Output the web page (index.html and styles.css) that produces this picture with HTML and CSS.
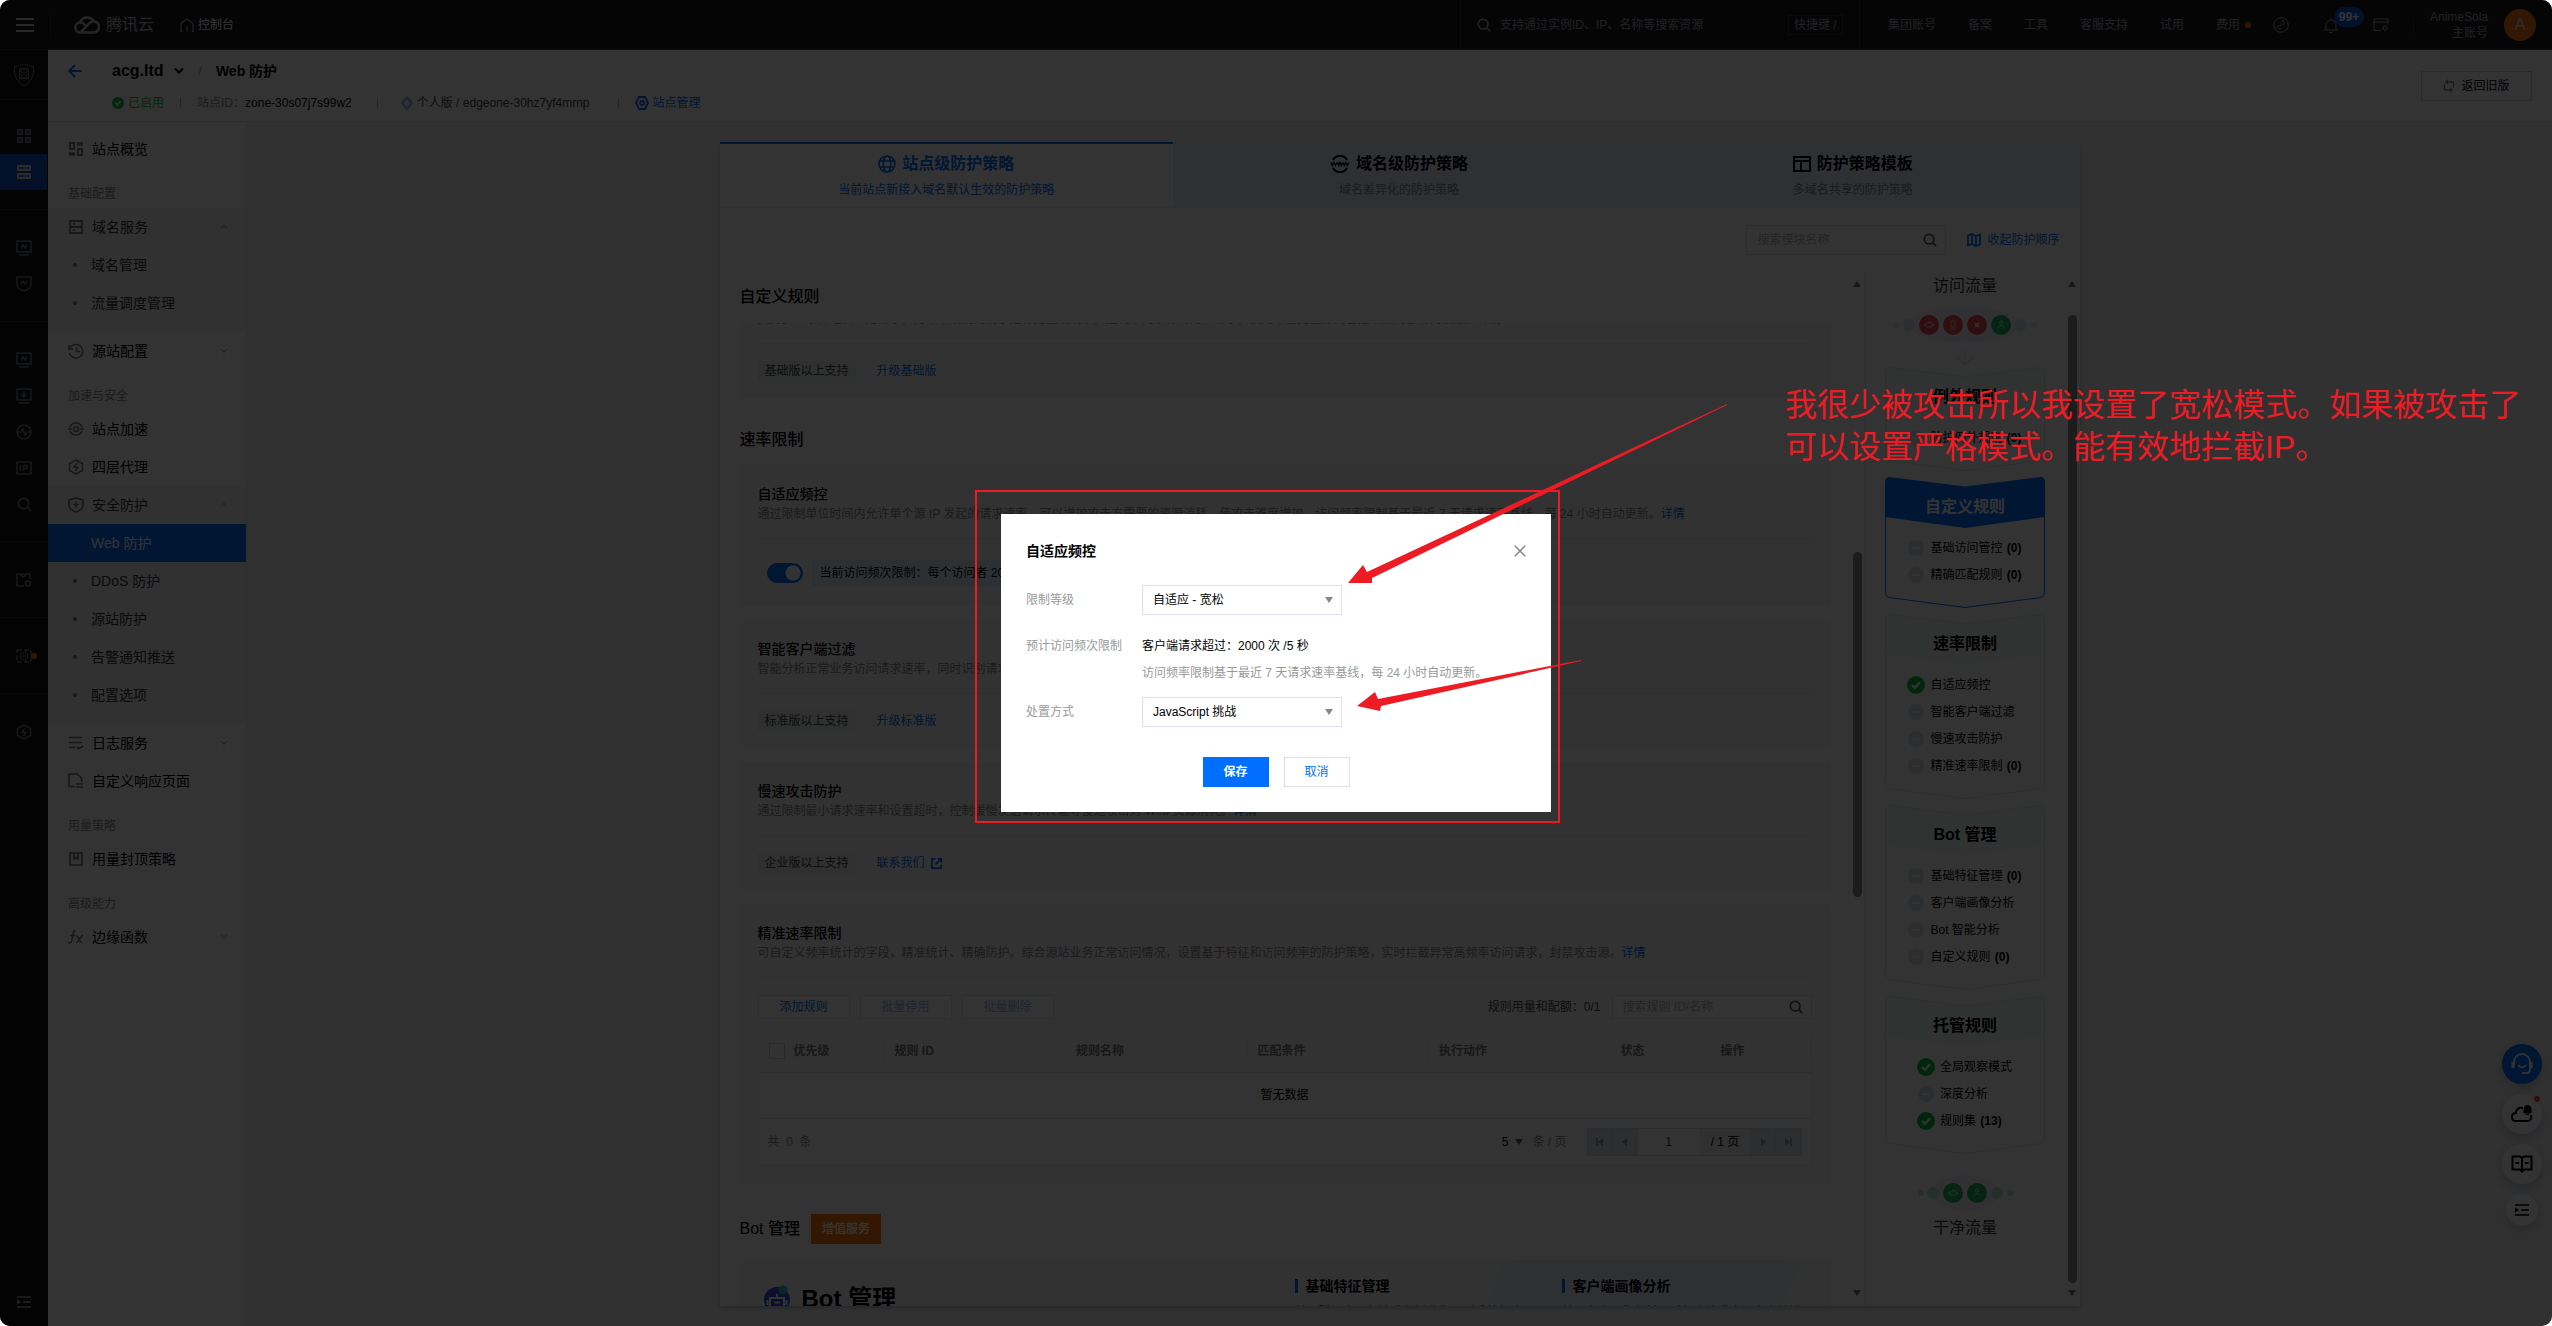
FILE: index.html
```html
<!DOCTYPE html>
<html lang="zh-CN">
<head>
<meta charset="utf-8">
<title>Web 防护 - 腾讯云控制台</title>
<link rel="stylesheet" href="styles.css">
</head>
<body>
<svg class="sprite" aria-hidden="true">
  <symbol id="i-menu" viewBox="0 0 18 14"><path d="M0 1h18M0 7h18M0 13h18" stroke-width="2"/></symbol>
  <symbol id="i-cloud" viewBox="0 0 26 20"><path d="M6.500 17.500a5 5 0 0 1-.5-10 7.500 7.500 0 0 1 13.500-1.500M6.500 17.500h13a5.500 5.500 0 1 0-4-9.300L6.500 17.500M6 7.500c2.500 0 4 1.200 5.500 2.800" stroke-width="2.500"/></symbol>
  <symbol id="i-home" viewBox="0 0 14 14"><path d="M2.500 13.500H1V5.500L7 .8l6 4.700v8h-1.500M7 13.500V8" stroke-width="1.300"/></symbol>
  <symbol id="i-search" viewBox="0 0 16 16"><circle cx="7" cy="7" r="5.500" stroke-width="2"/><path d="M11 11l4 4" stroke-width="2"/></symbol>
  <symbol id="i-link" viewBox="0 0 16 16"><circle cx="8" cy="8" r="7.300"/><path d="M6.500 9.500l3-3M7.500 5.500l1-1c2-1.500 4 .5 2.800 2.500l-1.300 1.300M8.500 10.500l-1 1c-2 1.500-4-.5-2.800-2.500L6 7.700"/></symbol>
  <symbol id="i-bell" viewBox="0 0 16 16"><path d="M1 13h14M3 13V8a5 5 0 0 1 10 0v5M8 1v2M6 15.400h4"/></symbol>
  <symbol id="i-card" viewBox="0 0 16 14"><path d="M8 12.500H1V1h14v5.500M1 4h14"/><circle cx="12" cy="10" r="2"/><path d="M12 7v1M12 12v1.500M9 10h1M14 10h1.500"/></symbol>
  <symbol id="i-shield" viewBox="0 0 22 24"><path d="M11 1c3 1.500 6 2.200 9.500 2.500 1 9-2.500 15-9.500 19.500C4 18.500.5 12.500 1.500 3.500 5 3.200 8 2.500 11 1z"/><path d="M6.500 5.500h9v10h-9zM6.500 5.500l9 10M15.500 5.500l-9 10"/><ellipse cx="11" cy="10.500" rx="3" ry="4.500"/></symbol>
  <symbol id="i-grid" viewBox="0 0 14 14"><path d="M1 1h4v4H1zM9 1h4v4H9zM1 9h4v4H1zM9 9h4v4H9z" stroke-width="2"/></symbol>
  <symbol id="i-dash" viewBox="0 0 14 14"><path d="M1 1h4v6H1zM9 7h4v6H9z" stroke-width="2"/><path d="M8 2h6M0 12h6" stroke-width="3.500"/></symbol>
  <symbol id="i-server" viewBox="0 0 14 14"><path d="M1 1h12v4H1zM1 9h12v4H1z" stroke-width="2"/><path d="M3 3h1M6 3h5M3 11h1M6 11h5" stroke-width="1"/></symbol>
  <symbol id="i-rack" viewBox="0 0 14 14"><path d="M1 1h12v12H1zM1 7h12" stroke-width="1.800"/><path d="M4 4h2M4 10h2" stroke-width="1.500"/></symbol>
  <symbol id="i-monitor" viewBox="0 0 16 16"><path d="M1 1h14v11H1zM3 15h10M5 8l2-3 2 3 2-3" stroke-width="1.500"/></symbol>
  <symbol id="i-guard" viewBox="0 0 16 16"><path d="M1 1h14v8c0 3-4 5-7 6-3-1-7-3-7-6zM5 8l2-3 2 3 2-3" stroke-width="1.500"/></symbol>
  <symbol id="i-screen" viewBox="0 0 16 16"><path d="M1 1h14v11H1zM3 15h10M8 3v6M5.500 6.500L8 9l2.500-2.500" stroke-width="1.500"/></symbol>
  <symbol id="i-pulse" viewBox="0 0 16 16"><circle cx="8" cy="8" r="7" stroke-width="1.500"/><path d="M1 8h4l2-3 2 6 2-3h4" stroke-width="1.500"/></symbol>
  <symbol id="i-ip" viewBox="0 0 16 14"><path d="M1 1h14v12H1zM4.500 4v6M7.500 10V4.500h3.500V7.500H7.500" stroke-width="1.500"/></symbol>
  <symbol id="i-box" viewBox="0 0 16 14"><path d="M8 13H1V1h13v5M4 1l3 3 4-3" stroke-width="1.500"/><circle cx="12" cy="10.500" r="2.500" stroke-width="1.500"/></symbol>
  <symbol id="i-cube" viewBox="0 0 16 14"><path d="M1 1h14v12H1z" stroke-dasharray="5 2" stroke-width="1.500"/><circle cx="8" cy="7" r="4"/><circle cx="8" cy="7" r="1.500"/></symbol>
  <symbol id="i-hex" viewBox="0 0 16 16"><path d="M8 1l6.500 3.500v7L8 15l-6.500-3.500v-7zM9 4L6 8.500h4L7.500 12" stroke-width="1.500"/></symbol>
  <symbol id="i-indent" viewBox="0 0 14 12"><path d="M0 1h14M6 6h8M0 11h14" stroke-width="1.500"/><path d="M0 3.500L4 6 0 8.500z" fill="currentColor" stroke="none"/></symbol>
  <symbol id="i-back" viewBox="0 0 14 14"><path d="M13.500 7H1.500M7 1L1.200 7 7 13" stroke-width="2"/></symbol>
  <symbol id="i-down" viewBox="0 0 10 8"><path d="M1 1.500l4 4 4-4" stroke-width="2"/></symbol>
  <symbol id="i-up" viewBox="0 0 10 8"><path d="M1 6l4-4 4 4" stroke-width="2"/></symbol>
  <symbol id="i-ok" viewBox="0 0 16 16"><circle cx="8" cy="8" r="8" fill="currentColor" stroke="none"/><path d="M4.500 8l2.500 2.500 4.500-5" stroke="#fff" stroke-width="2"/></symbol>
  <symbol id="i-off" viewBox="0 0 16 16"><circle cx="8" cy="8" r="8" fill="currentColor" stroke="none"/><path d="M4 8h8" stroke="#fff" stroke-width="2"/></symbol>
  <symbol id="i-diamond" viewBox="0 0 12 16"><path d="M6 0l6 8-6 8-6-8z" fill="#a9b0d8" stroke="none"/><path d="M6 4l3 4-3 4-3-4z" fill="#eef0fa" stroke="none"/></symbol>
  <symbol id="i-nut" viewBox="0 0 14 14"><path d="M4 1h6l3 6-3 6H4L1 7z" stroke-width="1.800"/><circle cx="7" cy="7" r="2" stroke-width="1.800"/></symbol>
  <symbol id="i-swap" viewBox="0 0 12 14"><path d="M10.500 9V3H3M1.500 5v6H9M5 .8L2.800 3 5 5.200M7 8.800L9.200 11 7 13.200" stroke-width="1.300"/></symbol>
  <symbol id="i-clock" viewBox="0 0 16 16"><path d="M2 5a6.800 6.800 0 1 1-.6 5M1 2v4h4M8.500 4.500v4h3.500" stroke-width="1.500"/></symbol>
  <symbol id="i-speed" viewBox="0 0 16 16"><path d="M2 6a6.500 6.500 0 0 1 12 0M14 10a6.500 6.500 0 0 1-12 0M0 8h4M12 8h4" stroke-width="1.700"/><circle cx="8" cy="8" r="2.500" stroke-width="1.700"/></symbol>
  <symbol id="i-plus" viewBox="0 0 16 16"><path d="M8 1l7 2v5c0 4-4 6-7 7-3-1-7-3-7-7V3zM8 4.500v6M5 7.500h6" stroke-width="1.700"/></symbol>
  <symbol id="i-log" viewBox="0 0 16 14"><path d="M1 1.500h13M1 6.500h13M1 11.500h6M8.500 11l2.500 1.500 4-2.500" stroke-width="1.600"/></symbol>
  <symbol id="i-page" viewBox="0 0 16 16"><path d="M7 13.500H1V1h8l4.500 4v4M8 11h7M15 14H8" stroke-width="1.600"/></symbol>
  <symbol id="i-cap" viewBox="0 0 14 14"><path d="M1 1h12v12H1zM5 1v6l2-1.500L9 7V1" stroke-width="1.700"/></symbol>
  <symbol id="i-fx" viewBox="0 0 16 14"><path d="M8 1C5 0 5 3 4.500 7S3 14 0 12.500M2 5.500h5M8 5.500c3 0 3 7 6 7M15 5.500c-3 0-4 7-7 7" stroke-width="1.500"/></symbol>
  <symbol id="i-globe" viewBox="0 0 18 18"><circle cx="9" cy="9" r="8" stroke-width="1.600"/><ellipse cx="9" cy="9" rx="3.800" ry="8" stroke-width="1.600"/><path d="M1.500 6h15M1.500 12h15" stroke-width="1.600"/></symbol>
  <symbol id="i-www" viewBox="0 0 20 18"><path d="M3 5a8 8 0 0 1 14 0M3 13a8 8 0 0 0 14 0" stroke-width="2"/><path d="M.8 7.200l1.500 3.300L4 7.500l1.500 3 1.500-3M7.500 7.200L8.800 10.500 10 7.500l1.300 3 1.300-3M13 7.200l1.300 3.300 1.500-3 1.500 3 1.500-3" stroke-width="1.300"/></symbol>
  <symbol id="i-tpl" viewBox="0 0 18 16"><path d="M1 1h16v14H1zM1 5h16M8 5v10" stroke-width="2"/></symbol>
  <symbol id="i-map" viewBox="0 0 14 14"><path d="M1 2.500L5 1l4 2 4-1.500v10L9 13l-4-2-4 1.500zM5 1v10M9 3v10" stroke-width="1.800"/></symbol>
  <symbol id="i-out" viewBox="0 0 12 12"><path d="M5 1H1v10h10V7M7.500 1H11v3.500M11 1L5 7" stroke-width="1.900"/></symbol>
  <symbol id="i-tri" viewBox="0 0 8 6"><path d="M0 0h8L4 6z" fill="currentColor" stroke="none"/></symbol>
</svg>

<div class="app">
  <header class="topbar">
    <button class="icon-btn menu" aria-label="菜单"><svg width="18" height="14"><use href="#i-menu"/></svg></button>
    <a class="brand" href="#"><svg width="26" height="20"><use href="#i-cloud"/></svg>腾讯云</a>
    <a class="console" href="#"><svg width="14" height="14"><use href="#i-home"/></svg>控制台</a>
    <div class="top-search">
      <svg width="14" height="14"><use href="#i-search"/></svg>
      <input type="text" aria-label="搜索资源" placeholder="支持通过实例ID、IP、名称等搜索资源">
      <span class="hotkey">快捷键 /</span>
    </div>
    <nav class="top-nav">
      <a href="#">集团账号</a><a href="#">备案</a><a href="#">工具</a><a href="#">客服支持</a><a href="#">试用</a><a href="#" class="cost">费用<i></i></a>
    </nav>
    <div class="top-icons">
      <svg width="16" height="16"><use href="#i-link"/></svg>
      <span class="bell"><svg width="16" height="16"><use href="#i-bell"/></svg><b>99+</b></span>
      <svg width="16" height="14"><use href="#i-card"/></svg>
    </div>
    <div class="account"><span>AnimeSola</span><span>主账号</span></div>
    <span class="avatar">A</span>
  </header>

  <div class="frame">
    <nav class="rail" aria-label="产品">
      <a class="rail-logo" href="#" aria-label="EdgeOne"><svg width="22" height="24"><use href="#i-shield"/></svg></a>
      <div class="rail-group first"><a href="#" aria-label="概览"><svg width="14" height="14"><use href="#i-grid"/></svg></a><a href="#" class="on" aria-label="站点"><svg width="14" height="14"><use href="#i-server"/></svg></a></div>
      <div class="rail-group"><a href="#" aria-label="监控"><svg width="16" height="16"><use href="#i-monitor"/></svg></a><a href="#" aria-label="安全"><svg width="16" height="16"><use href="#i-guard"/></svg></a></div>
      <div class="rail-group"><a href="#" aria-label="刷新"><svg width="16" height="16"><use href="#i-monitor"/></svg></a><a href="#" aria-label="下载"><svg width="16" height="16"><use href="#i-screen"/></svg></a><a href="#" aria-label="诊断"><svg width="16" height="16"><use href="#i-pulse"/></svg></a><a href="#" aria-label="IP"><svg width="16" height="14"><use href="#i-ip"/></svg></a><a href="#" aria-label="查询"><svg width="15" height="15"><use href="#i-search"/></svg></a></div>
      <div class="rail-group"><a href="#" aria-label="套餐"><svg width="16" height="14"><use href="#i-box"/></svg></a></div>
      <div class="rail-group"><a href="#" class="hot" aria-label="新功能"><svg width="16" height="14"><use href="#i-cube"/></svg><i></i></a></div>
      <div class="rail-group last"><a href="#" aria-label="加速"><svg width="16" height="16"><use href="#i-hex"/></svg></a></div>
      <button class="icon-btn collapse" aria-label="展开"><svg width="14" height="12"><use href="#i-indent"/></svg></button>
    </nav>

    <div class="work">
      <div class="page-head">
        <a class="back" href="#" aria-label="返回"><svg width="14" height="14"><use href="#i-back"/></svg></a>
        <div class="head-text">
          <div class="crumbs"><strong>acg.ltd</strong><svg width="10" height="8"><use href="#i-down"/></svg><span class="slash">/</span><h1>Web 防护</h1></div>
          <div class="meta">
            <span class="enabled"><svg width="12" height="12"><use href="#i-ok"/></svg>已启用</span>
            <span class="site-id">站点ID：<b>zone-30s07j7s99w2</b></span>
            <span class="plan"><svg width="12" height="16"><use href="#i-diamond"/></svg>个人版 / edgeone-30hz7yf4mrnp</span>
            <a href="#" class="manage"><svg width="14" height="14"><use href="#i-nut"/></svg>站点管理</a>
          </div>
        </div>
        <button class="old-ver"><svg width="12" height="14"><use href="#i-swap"/></svg>返回旧版</button>
      </div>

      <div class="split">
        <nav class="side" aria-label="站点菜单">
          <a href="#" class="item"><svg width="14" height="14"><use href="#i-dash"/></svg>站点概览</a>
          <h3>基础配置</h3>
          <div class="group">
            <a href="#" class="item"><svg width="14" height="14"><use href="#i-rack"/></svg>域名服务<svg class="caret" width="8" height="6"><use href="#i-up"/></svg></a>
            <a href="#" class="sub">域名管理</a>
            <a href="#" class="sub">流量调度管理</a>
          </div>
          <a href="#" class="item"><svg width="16" height="16"><use href="#i-clock"/></svg>源站配置<svg class="caret" width="8" height="6"><use href="#i-down"/></svg></a>
          <h3>加速与安全</h3>
          <a href="#" class="item"><svg width="16" height="16"><use href="#i-speed"/></svg>站点加速</a>
          <a href="#" class="item"><svg width="16" height="16"><use href="#i-hex"/></svg>四层代理</a>
          <div class="group">
            <a href="#" class="item"><svg width="16" height="16"><use href="#i-plus"/></svg>安全防护<svg class="caret" width="8" height="6"><use href="#i-up"/></svg></a>
            <a href="#" class="sub on">Web 防护</a>
            <a href="#" class="sub">DDoS 防护</a>
            <a href="#" class="sub">源站防护</a>
            <a href="#" class="sub">告警通知推送</a>
            <a href="#" class="sub">配置选项</a>
          </div>
          <a href="#" class="item"><svg width="16" height="14"><use href="#i-log"/></svg>日志服务<svg class="caret" width="8" height="6"><use href="#i-down"/></svg></a>
          <a href="#" class="item"><svg width="16" height="16"><use href="#i-page"/></svg>自定义响应页面</a>
          <h3>用量策略</h3>
          <a href="#" class="item"><svg width="14" height="14"><use href="#i-cap"/></svg>用量封顶策略</a>
          <h3>高级能力</h3>
          <a href="#" class="item"><svg width="16" height="14"><use href="#i-fx"/></svg>边缘函数<svg class="caret" width="8" height="6"><use href="#i-down"/></svg></a>
        </nav>

        <main class="content">
          <section class="panel">
            <div class="tabs" role="tablist">
              <button role="tab" aria-selected="true" class="tab on"><span class="tab-title"><svg width="18" height="18"><use href="#i-globe"/></svg>站点级防护策略</span><span class="tab-sub">当前站点新接入域名默认生效的防护策略</span></button>
              <button role="tab" class="tab"><span class="tab-title"><svg width="20" height="18"><use href="#i-www"/></svg>域名级防护策略</span><span class="tab-sub">域名差异化的防护策略</span></button>
              <button role="tab" class="tab"><span class="tab-title"><svg width="18" height="16"><use href="#i-tpl"/></svg>防护策略模板</span><span class="tab-sub">多域名共享的防护策略</span></button>
            </div>
            <div class="toolbar">
              <label class="search"><input type="text" aria-label="搜索模块名称" placeholder="搜索模块名称"><svg width="14" height="14"><use href="#i-search"/></svg></label>
              <a href="#" class="fold"><svg width="14" height="14"><use href="#i-map"/></svg>收起防护顺序</a>
            </div>

            <div class="columns">
              <div class="rules">
                <h2 class="pinned">自定义规则</h2>
                <div class="rules-body">
                  <article class="card scrolled">
                    <h4>精准匹配规则</h4>
                    <p>支持多个条件组合匹配请求，对命中规则的请求进行处置或观察，控制不同条件的用户请求，使用丰富处置方式管控站点内容访问权限。详情</p>
                    <div class="card-row"><span class="tag">基础版以上支持</span><a href="#">升级基础版</a></div>
                  </article>

                  <h2>速率限制</h2>
                  <article class="card">
                    <h4>自适应频控</h4>
                    <p>通过限制单位时间内允许单个源 IP 发起的请求速率，可以增加攻击方需要的资源消耗，使攻击难度增加。访问频率限制基于最近 7 天请求速率基线，每 24 小时自动更新。<a href="#">详情</a></p>
                    <div class="card-row tall"><input type="checkbox" class="switch" checked aria-label="自适应频控"><span class="note">当前访问频次限制：每个访问者 2000 次 /5 秒</span></div>
                  </article>
                  <article class="card">
                    <h4>智能客户端过滤</h4>
                    <p>智能分析正常业务访问请求速率，同时识别请求速率异常的客户端并进行处置。</p>
                    <div class="card-row"><span class="tag">标准版以上支持</span><a href="#">升级标准版</a></div>
                  </article>
                  <article class="card">
                    <h4>慢速攻击防护</h4>
                    <p>通过限制最小请求速率和设置超时，控制缓慢发送请求传输等慢速攻击对 Web 资源消耗。<a href="#">详情</a></p>
                    <div class="card-row"><span class="tag">企业版以上支持</span><a href="#">联系我们<svg width="11" height="11"><use href="#i-out"/></svg></a></div>
                  </article>
                  <article class="card">
                    <h4>精准速率限制</h4>
                    <p>可自定义频率统计的字段，精准统计、精确防护。综合源站业务正常访问情况，设置基于特征和访问频率的防护策略，实时拦截异常高频率访问请求，封禁攻击源。<a href="#">详情</a></p>
                    <div class="card-block">
                      <div class="actions">
                        <button>添加规则</button><button disabled>批量停用</button><button disabled>批量删除</button>
                        <span class="quota">规则用量和配额：0/1</span>
                        <label class="search small"><input type="text" aria-label="搜索规则" placeholder="搜索规则 ID/名称"><svg width="14" height="14"><use href="#i-search"/></svg></label>
                      </div>
                      <div class="grid-box">
                        <table>
                          <colgroup><col class="c-first"><col class="c-mid"><col class="c-mid"><col class="c-mid"><col class="c-mid"><col class="c-end"><col class="c-end"></colgroup>
                          <thead><tr><th><span class="th"><input type="checkbox" aria-label="全选">优先级</span></th><th><span class="th">规则 ID</span></th><th><span class="th">规则名称</span></th><th><span class="th">匹配条件</span></th><th><span class="th">执行动作</span></th><th><span class="th">状态</span></th><th><span class="th">操作</span></th></tr></thead>
                          <tbody><tr><td colspan="7">暂无数据</td></tr></tbody>
                        </table>
                        <div class="pager">
                          <span class="total">共&nbsp; 0 &nbsp;条</span>
                          <span class="size">5<svg width="8" height="6"><use href="#i-tri"/></svg></span><span class="unit">条 / 页</span>
                          <div class="pages">
                            <button disabled aria-label="首页"><svg width="8" height="8" viewBox="0 0 8 8"><path d="M1 0v8" stroke-width="1.500"/><path d="M7 0v8L2 4z" fill="currentColor" stroke="none"/></svg></button>
                            <button disabled aria-label="上一页"><svg width="8" height="8" viewBox="0 0 8 8"><path d="M6 0v8L1 4z" fill="currentColor" stroke="none"/></svg></button>
                            <input type="text" value="1" aria-label="页码"><span>/ 1 页</span>
                            <button disabled aria-label="下一页"><svg width="8" height="8" viewBox="0 0 8 8"><path d="M2 0v8l5-4z" fill="currentColor" stroke="none"/></svg></button>
                            <button disabled aria-label="末页"><svg width="8" height="8" viewBox="0 0 8 8"><path d="M7 0v8" stroke-width="1.500"/><path d="M1 0v8l5-4z" fill="currentColor" stroke="none"/></svg></button>
                          </div>
                        </div>
                      </div>
                    </div>
                  </article>

                  <h2 class="with-tag">Bot 管理<span>增值服务</span></h2>
                  <article class="card bot">
                    <div class="bot-name">
                      <svg width="28" height="28" viewBox="0 0 28 28"><circle cx="14" cy="15" r="13" fill="#3a4be0" stroke="none"/><circle cx="20" cy="5" r="4.500" fill="#2fc3c9" stroke="none"/><path d="M7 13h14v9H7zM14 9v4M11 17.500h6M4.500 15v5M23.500 15v5" stroke="#fff" stroke-width="2"/></svg>
                      Bot 管理
                    </div>
                    <div class="bot-col"><h5>基础特征管理</h5><p>基于腾讯十万亿请求分析收集，形成特征库</p></div>
                    <div class="bot-col"><h5>客户端画像分析</h5><p>基于客户画像分析，对每个请求来源客户端进</p></div>
                  </article>
                </div>
              </div>
              <div class="bar left"><svg width="8" height="6" class="flip"><use href="#i-tri"/></svg><span class="track"><i></i></span><svg width="8" height="6"><use href="#i-tri"/></svg></div>

              <aside class="flow">
                <div class="flow-title">访问流量</div>
                <svg class="traffic" width="150" height="50" viewBox="0 0 150 50">
                  <ellipse cx="75" cy="25" rx="54" ry="18" fill="#f2f6fc" stroke="none"/>
                  <g fill="#dbe7f7" stroke="none"><circle cx="6" cy="25" r="3"/><circle cx="19" cy="25" r="6"/><circle cx="131" cy="25" r="6"/><circle cx="144" cy="25" r="3"/></g>
                  <g fill="#e8474d" stroke="none"><circle cx="39" cy="25" r="10"/><circle cx="63" cy="25" r="10"/><circle cx="87" cy="25" r="10"/></g><circle cx="111" cy="25" r="10" fill="#1fb45f" stroke="none"/>
                  <g stroke="#fff" opacity=".7"><path d="M36 23h6v4h-6zM39 21v2M34.500 24v2M43.500 24v2"/><path d="M61 21h4v6h-4zM60 29h6"/><path d="M84 22l6 6M90 22l-6 6M85.500 23.500h3v3h-3z"/><circle cx="111" cy="22.500" r="1.500"/><path d="M108 28.500c0-4 6-4 6 0"/></g>
                </svg>
                <svg class="arrow" width="18" height="17" viewBox="0 0 18 17"><path d="M9 0v15M1 7l8 8 8-8" stroke="#e1e9f4" stroke-width="2"/></svg>

                <div class="step">
                  <svg width="160" height="104"><path class="body" d="M4 .5L80 10l76-9.500q3.500 0 3.500 4v84q0 4-3.500 5L80 103.500 4 93.500q-3.500-1-3.500-5v-84q0-4 3.500-4z"/><path class="cap" d="M4 1l76 9 76-9q3 0 3 4v35l-79 10L1 40V5q0-4 3-4z"/></svg>
                  <h3>例外规则</h3>
                  <ul><li><svg width="16" height="16"><use href="#i-off"/></svg>防护例外规则 <b>(0)</b></li></ul>
                </div>
                <div class="step current">
                  <svg width="160" height="131"><path class="body" d="M4 .5L80 10l76-9.500q3.500 0 3.500 4v111q0 4-3.500 5L80 130.500 4 120.500q-3.500-1-3.500-5v-111q0-4 3.500-4z"/><path class="cap" d="M4 .5L80 10l76-9.500q3.500 0 3.500 4V40L80 51 .5 40V4.500q0-4 3.500-4z"/></svg>
                  <h3>自定义规则</h3>
                  <ul><li><svg width="16" height="16"><use href="#i-off"/></svg>基础访问管控 <b>(0)</b></li><li><svg width="16" height="16"><use href="#i-off"/></svg>精确匹配规则 <b>(0)</b></li></ul>
                </div>
                <div class="step">
                  <svg width="160" height="185"><path class="body" d="M4 .5L80 10l76-9.500q3.500 0 3.500 4v165q0 4-3.500 5L80 184.500 4 174.500q-3.500-1-3.500-5v-165q0-4 3.500-4z"/><path class="cap" d="M4 1l76 9 76-9q3 0 3 4v35l-79 10L1 40V5q0-4 3-4z"/></svg>
                  <h3>速率限制</h3>
                  <ul><li><svg class="ok" width="18" height="18"><use href="#i-ok"/></svg>自适应频控</li><li><svg width="16" height="16"><use href="#i-off"/></svg>智能客户端过滤</li><li><svg width="16" height="16"><use href="#i-off"/></svg>慢速攻击防护</li><li><svg width="16" height="16"><use href="#i-off"/></svg>精准速率限制 <b>(0)</b></li></ul>
                </div>
                <div class="step">
                  <svg width="160" height="185"><path class="body" d="M4 .5L80 10l76-9.500q3.500 0 3.500 4v165q0 4-3.500 5L80 184.500 4 174.500q-3.500-1-3.500-5v-165q0-4 3.500-4z"/><path class="cap" d="M4 1l76 9 76-9q3 0 3 4v35l-79 10L1 40V5q0-4 3-4z"/></svg>
                  <h3>Bot 管理</h3>
                  <ul><li><svg width="16" height="16"><use href="#i-off"/></svg>基础特征管理 <b>(0)</b></li><li><svg width="16" height="16"><use href="#i-off"/></svg>客户端画像分析</li><li><svg width="16" height="16"><use href="#i-off"/></svg>Bot 智能分析</li><li><svg width="16" height="16"><use href="#i-off"/></svg>自定义规则 <b>(0)</b></li></ul>
                </div>
                <div class="step">
                  <svg width="160" height="158"><path class="body" d="M4 .5L80 10l76-9.500q3.500 0 3.500 4v138q0 4-3.500 5L80 157.500 4 147.500q-3.500-1-3.500-5v-138q0-4 3.500-4z"/><path class="cap" d="M4 1l76 9 76-9q3 0 3 4v35l-79 10L1 40V5q0-4 3-4z"/></svg>
                  <h3>托管规则</h3>
                  <ul><li><svg class="ok" width="18" height="18"><use href="#i-ok"/></svg>全局观察模式</li><li><svg width="16" height="16"><use href="#i-off"/></svg>深度分析</li><li><svg class="ok" width="18" height="18"><use href="#i-ok"/></svg>规则集 <b>(13)</b></li></ul>
                </div>
                <svg class="clean" width="150" height="50" viewBox="0 0 150 50">
                  <ellipse cx="75" cy="25" rx="34" ry="18" fill="#f2f6fc" stroke="none"/>
                  <g fill="#bfe5cf" stroke="none"><circle cx="31" cy="25" r="3"/><circle cx="43" cy="25" r="6"/><circle cx="107" cy="25" r="6"/><circle cx="120" cy="25" r="3"/></g>
                  <g fill="#1fb45f" stroke="none"><circle cx="63" cy="25" r="10"/><circle cx="87" cy="25" r="10"/></g>
                  <g stroke="#fff" opacity=".7"><path d="M60 23h6v4h-6zM63 21v2M58.500 24v2M67.500 24v2"/><circle cx="87" cy="22.500" r="1.500"/><path d="M84 28.500c0-4 6-4 6 0"/></g>
                </svg>
                <div class="flow-title end">干净流量</div>
              </aside>
              <div class="bar right"><svg width="8" height="6" class="flip"><use href="#i-tri"/></svg><span class="track"><i></i></span><svg width="8" height="6"><use href="#i-tri"/></svg></div>
            </div>
          </section>
        </main>
      </div>
    </div>
  </div>

  <div class="floaters">
    <button class="blue" aria-label="客服"><svg width="22" height="22" viewBox="0 0 22 22"><path d="M3 12V9a8 8 0 0 1 16 0v8q0 3-3 3h-5M7 12c2 3 6 3 8 0" stroke-width="1.800"/><path d="M2 9v6M20 9v6" stroke-width="3"/></svg></button>
    <button aria-label="通知"><svg width="22" height="20" viewBox="0 0 22 20"><path d="M12 4c-4-1-7 1-7 5-3 0-4 2-4 4s1 4 4 4h11c4 0 5-3 4-6" stroke-width="2"/><path d="M13 9V5a3.500 3.500 0 0 1 7 0v4zM15 10.500h3" fill="currentColor"/></svg><i></i></button>
    <button aria-label="文档"><svg width="22" height="18" viewBox="0 0 22 18"><path d="M11 3L9 1.500H1.500v13H9l2 2 2-2h7.500v-13H13zM11 3v13M4.500 8H8M14 8h3.500" stroke-width="2"/></svg></button>
    <button class="mini" aria-label="收起"><svg width="14" height="12"><use href="#i-indent"/></svg></button>
  </div>

  <div class="mask">
    <form class="modal" role="dialog" aria-labelledby="dlg-title">
      <div class="modal-head"><h2 id="dlg-title">自适应频控</h2><button type="button" class="icon-btn" aria-label="关闭"><svg width="12" height="12" viewBox="0 0 12 12"><path d="M.8.8l10.400 10.400M11.200.8L.8 11.200" stroke-width="1.600"/></svg></button></div>
      <div class="field"><label for="level">限制等级</label><span class="select"><select id="level"><option>自适应 - 宽松</option></select><svg width="8" height="6"><use href="#i-tri"/></svg></span></div>
      <div class="field text"><span>预计访问频次限制</span><div><p>客户端请求超过：2000 次 /5 秒</p><p class="hint">访问频率限制基于最近 7 天请求速率基线，每 24 小时自动更新。</p></div></div>
      <div class="field"><label for="action">处置方式</label><span class="select"><select id="action"><option>JavaScript 挑战</option></select><svg width="8" height="6"><use href="#i-tri"/></svg></span></div>
      <div class="buttons"><button type="button" class="primary">保存</button><button type="button">取消</button></div>
      <div class="outline"></div>
      <svg class="arrows" width="760" height="320" viewBox="0 0 760 320"><path d="M347 179l15-18 4 7L726 0v1L371 174v5zM356 302l18-14 3 7 203-39v1L380 302l-1 5z"/></svg>
      <p class="remark">我很少被攻击所以我设置了宽松模式。如果被攻击了<br>可以设置严格模式。能有效地拦截IP。</p>
    </form>
  </div>
</div>
</body>
</html>
```
FILE: styles.css
```css
* { box-sizing: border-box; }
body { margin: 0; background: #fff; color: #000; font: 12px/20px "Liberation Sans", "Noto Sans CJK SC", sans-serif; }
h1, h2, h3, h4, h5, p, ul { margin: 0; padding: 0; font-size: inherit; font-weight: inherit; }
a { color: #006eff; text-decoration: none; }
button, input, select { font: inherit; color: inherit; margin: 0; padding: 0; border: 0; background: none; border-radius: 0; }
input { outline: 0; min-width: 0; }
svg { fill: none; stroke: currentColor; flex: none; display: block; }
.sprite { position: absolute; width: 0; height: 0; }

.app { position: relative; height: 100vh; border-radius: 10px; overflow: hidden; display: flex; flex-direction: column; background: #fff; }
.icon-btn { display: flex; }

/* top bar */
.topbar { flex: none; height: 50px; display: flex; align-items: center; background: #1c1d20; color: #a0a4aa; border-bottom: 1px solid #33363b; padding-right: 16px; }
.topbar a { color: inherit; display: flex; align-items: center; }
.menu { width: 51px; height: 24px; padding-left: 16px; align-items: center; border-right: 1px solid #33363b; color: #ccc; }
.topbar .brand { margin-left: 23px; gap: 6px; font-size: 16px; color: #bbb; }
.topbar .console { margin-left: 26px; gap: 4px; color: #fff; }
.console svg { color: #999; }
.top-search { margin-left: auto; width: 400px; height: 100%; display: flex; align-items: center; padding: 0 16px; gap: 9px; border-left: 1px solid #33363b; border-right: 1px solid #33363b; }
.top-search input { flex: 1; }
.top-search input::placeholder { color: #a0a4aa; opacity: 1; }
.hotkey { border: 1px solid #33363b; padding: 0 5px; line-height: 18px; width: 55px; white-space: nowrap; }
.top-nav { display: flex; gap: 32px; padding-left: 28px; }
.cost i { width: 6px; height: 6px; border-radius: 50%; background: #ff7200; margin-left: 5px; }
.top-icons { display: flex; align-items: center; gap: 34px; margin-left: 22px; padding-right: 24px; border-right: 1px solid #33363b; }
.bell { position: relative; }
.bell b { position: absolute; left: 11px; top: -10px; width: 30px; line-height: 20px; border-radius: 10px; background: #0d5be1; color: #fff; text-align: center; }
.account { width: 74px; display: flex; flex-direction: column; align-items: flex-end; line-height: 16px; }
.avatar { width: 32px; height: 32px; margin-left: 16px; border-radius: 50%; background: #f07a1c; color: #ddd; font-size: 16px; line-height: 32px; text-align: center; }

/* product rail */
.frame { flex: 1; min-height: 0; display: flex; }
.rail { width: 48px; flex: none; background: #0f1012; display: flex; flex-direction: column; color: #777b82; }
.rail a { height: 36px; display: flex; align-items: center; justify-content: center; color: inherit; position: relative; }
.rail .rail-logo { height: 50px; border-bottom: 1px solid #26282c; }
.rail-group { padding: 20px 0 19px; border-bottom: 1px solid #26282c; }
.rail-group.first { padding: 18px 0 19px; }
.rail-group.last { border: 0; }
.rail .on { background: #0d55c8; color: #ddd; margin-right: 1px; }
.hot i { position: absolute; right: 11px; top: 15px; width: 6px; height: 6px; border-radius: 50%; background: #ff7200; }
.collapse { margin: auto auto 18px; color: #aaa; }

/* page header */
.work { flex: 1; min-width: 0; display: flex; flex-direction: column; }
.page-head { flex: none; height: 72px; display: flex; padding: 0 20px; border-bottom: 1px solid #e5e8ed; }
.back { padding-top: 14px; margin-right: 30px; }
.crumbs { display: flex; align-items: center; height: 24px; margin: 9px 0 10px; }
.crumbs strong { font-size: 16px; margin-right: 10px; }
.crumbs h1 { font-size: 14px; font-weight: 700; }
.slash { color: #aaa; margin: 0 14px 0 15px; }
.meta { display: flex; align-items: center; }
.meta > * { display: flex; align-items: center; gap: 4px; }
.meta > * + *::before { content: ""; width: 1px; height: 10px; background: #bbb; }
.enabled { color: #0abf5b; margin-right: 16px; }
.site-id { color: #888; gap: 0; margin-right: 25px; }
.site-id::before { margin-right: 16px; }
.site-id b { font-weight: 400; color: #000; }
.plan { color: #444; margin-right: 28px; }
.plan::before { margin-right: 19px; }
.manage::before { margin-right: 12px; }
.old-ver { margin: 21px 0 0 auto; width: 111px; height: 30px; border: 1px solid #cfd5de; display: flex; align-items: center; justify-content: center; gap: 6px; }
.old-ver svg { color: #888; }

/* site menu */
.split { flex: 1; min-height: 0; display: flex; }
.side { width: 199px; flex: none; border-right: 1px solid #dcdfe4; padding-top: 8px; font-size: 14px; }
.side a { height: 38px; display: flex; align-items: center; color: #000; padding: 0 18px 0 20px; }
.item svg { width: 16px; margin-right: 8px; color: #777; }
.item .caret { width: 8px; margin: 0 0 0 auto; color: #bbb; }
.side h3 { margin-top: 12px; padding-left: 20px; font-size: 12px; line-height: 28px; color: #888; }
.group { background: #f2f4f7; padding-bottom: 10px; }
.side .group a { color: #333; }
.side .sub::before { content: ""; width: 4px; height: 4px; border-radius: 50%; background: #777; margin: 0 14px 0 5px; }
.side .group .on { background: #006eff; color: #fff; }
.side .on::before { visibility: hidden; }

/* main panel */
.content { flex: 1; min-width: 0; background: #f3f4f7; padding: 20px; display: flex; justify-content: center; }
.panel { width: 100%; max-width: 1360px; background: #fff; box-shadow: 0 2px 4px rgba(54, 58, 80, .32); display: flex; flex-direction: column; min-height: 0; }
.tabs { flex: none; display: grid; grid-template-columns: repeat(3, 1fr); }
.tab { height: 66px; background: #e9edf3; border-right: 1px solid #dfe4ec; display: flex; flex-direction: column; align-items: center; justify-content: center; padding-top: 2px; gap: 5px; }
.tab:last-child { border-right: 0; }
.tab.on { background: #fff; color: #006eff; border-top: 2px solid #006eff; border-right: 0; border-bottom: 1px solid #eee; }
.tab-title { display: flex; align-items: center; gap: 6px; font-size: 16px; line-height: 22px; font-weight: 700; }
.tab-sub { color: #888; }
.on .tab-sub { color: inherit; }
.toolbar { flex: none; display: flex; justify-content: flex-end; align-items: center; height: 64px; padding-right: 20px; }
.search { width: 200px; height: 30px; border: 1px solid #e3e5e9; display: flex; align-items: center; padding: 0 8px 0 10px; background: #fff; }
.search input { flex: 1; }
.search input::placeholder { color: #b5b5b5; opacity: 1; }
.search svg { color: #555; }
.search.small { height: 24px; margin-left: 11px; }
.fold { margin-left: 21px; display: flex; align-items: center; gap: 6px; }
.columns { flex: 1; min-height: 0; display: flex; }

.rules { flex: 1; min-width: 0; display: flex; flex-direction: column; padding: 0 20px; }
.rules h2 { font-size: 16px; line-height: 20px; font-weight: 500; padding: 33px 0 16px; }
.rules h2.pinned { padding: 15px 0 16px; }
.rules-body { flex: 1; min-height: 0; overflow: hidden; }
.card { background: #f9fafb; border: 1px solid #f0f2f4; padding: 17px; margin-bottom: 16px; }
.card.scrolled { margin-top: -52px; }
.card:has(+ h2) { margin-bottom: 0; }
.card h4 { font-size: 14px; font-weight: 500; }
.card > p { color: #888; padding-bottom: 14px; border-bottom: 1px solid #e8eaed; white-space: nowrap; }
.card-row { display: flex; align-items: center; height: 20px; margin: 17px 0 -2px; }
.card-row.tall { height: 33px; padding-left: 9px; }
.card-row a { display: flex; align-items: center; gap: 6px; }
.tag { background: #eceef1; color: #444; padding: 0 7px; margin-right: 21px; }
.switch { appearance: none; width: 36px; height: 20px; border-radius: 10px; background: radial-gradient(circle at 26px 10px, #fff 7px, #006eff 8px); margin-right: 9px; }
.note { background: #e2efff; line-height: 26px; padding: 0 8px; }

.card-block { padding-top: 17px; margin-bottom: -2px; }
.actions { display: flex; align-items: center; margin-bottom: 10px; }
.actions button { width: 92px; height: 24px; border: 1px solid #e3e5e9; background: #fff; color: #006eff; margin-right: 10px; }
.actions button:disabled { color: #8fb9ee; }
.quota { margin-left: auto; color: #444; }
.grid-box { border: 1px solid #eceef1; background: #fff; }
table { width: 100%; border-collapse: collapse; table-layout: fixed; }
.c-first { width: 126px; }
.c-end { width: 100px; }
th { height: 42px; padding: 0; background: #f9fafb; text-align: left; color: #777; }
.th { display: flex; align-items: center; height: 22px; padding-left: 10px; border-right: 1px solid #eceef1; }
th input { appearance: none; width: 16px; height: 16px; border: 1px solid #ccc; margin-right: 9px; }
td { height: 46px; padding: 0; text-align: center; border: 1px solid #e3e5e9; border-width: 1px 0; }
.pager { display: flex; align-items: center; height: 46px; padding: 0 9px; }
.total { color: #888; margin-right: auto; }
.size { display: flex; align-items: center; gap: 7px; }
.size svg { color: #666; }
.unit { color: #888; margin: 0 20px 0 9px; }
.pages { display: flex; height: 28px; width: 215px; border: 1px solid #d5dae1; background: #eef0f4; }
.pages > * { width: 25px; border-right: 1px solid #d5dae1; display: flex; align-items: center; justify-content: center; color: #999; }
.pages > :last-child { border-right: 0; }
.pages button { background: #dfe4ec; }
.pages input { flex: 1; background: #fff; text-align: center; color: #444; }
.pages span { width: 50px; color: #000; }

.rules h2.with-tag { display: flex; align-items: center; gap: 11px; padding: 32px 0 16px; }
.with-tag span { background: #ff7200; color: #fff; font-size: 12px; font-weight: 700; line-height: 30px; padding: 0 11px; }
.card.bot { display: grid; grid-template-columns: 537px 267px 1fr; height: 200px; padding-top: 18px; background: linear-gradient(115deg, transparent 64%, #e8f0fb 66%, #e8f0fb 88%, transparent 91%), #f9fafb; }
.bot-name { display: flex; align-items: center; gap: 11px; height: 40px; padding-left: 5px; font-size: 24px; font-weight: 700; }
.bot-col h5 { font-size: 14px; font-weight: 700; line-height: 14px; border-left: 3px solid #006eff; padding-left: 8px; margin-bottom: 9px; }
.bot-col p { color: #444; }

.bar { width: 15px; flex: none; display: flex; flex-direction: column; align-items: center; padding: 9px 0 10px; color: #777; }
.bar .flip { transform: rotate(180deg); }
.track { flex: 1; width: 9px; margin: 7px 0; display: flex; flex-direction: column; }
.track i { width: 9px; border-radius: 5px; background: #8a8a8a; }
.left .track { padding-top: 258px; }
.left i { height: 345px; }
.right .track { padding-top: 21px; }
.right i { flex: 1; }

/* protection order */
.flow { width: 200px; flex: none; border-left: 1px solid #e8eaed; display: flex; flex-direction: column; align-items: center; overflow: hidden; }
.flow-title { font-size: 16px; line-height: 28px; color: #333; }
.flow-title.end { line-height: 20px; }
.step { position: relative; width: 160px; padding: 19px 0 20px; margin-bottom: 6px; flex: none; display: flex; flex-direction: column; align-items: center; }
.step > svg { position: absolute; left: 0; top: 0; }
.body { fill: #fff; stroke: #dfe3e9; }
.cap { fill: #f6f7f9; stroke: none; }
.current .body { stroke: #006eff; }
.current .cap { fill: #006eff; }
.current h3 { color: #fff; }
.step h3 { position: relative; font-size: 16px; font-weight: 700; line-height: 22px; margin-bottom: 16px; }
.step ul { position: relative; list-style: none; }
.step li { height: 27px; display: flex; align-items: center; gap: 6px; white-space: pre; }
.step li svg { color: #dde2ea; }
.step li .ok { color: #0abf3b; margin: 0 -1px; }
.step li b { margin-left: -5px; }
.clean { margin-top: 8px; }

/* floating tools */
.floaters { position: absolute; right: 10px; bottom: 100px; display: flex; flex-direction: column; align-items: center; gap: 10px; }
.floaters button { position: relative; width: 40px; height: 40px; border-radius: 50%; background: #fff; box-shadow: 0 4px 12px rgba(54, 70, 100, .3); display: flex; align-items: center; justify-content: center; }
.floaters .blue { background: #006eff; color: #fff; }
.floaters .mini { width: 32px; height: 32px; }
.floaters i { position: absolute; right: 2px; top: 2px; width: 6px; height: 6px; border-radius: 50%; background: #e54545; }

/* dialog */
.mask { position: absolute; inset: 0; background: rgba(0, 0, 0, .8); display: flex; align-items: center; justify-content: center; }
.modal { position: relative; width: 550px; background: #fff; padding: 25px; }
.modal-head { display: flex; align-items: center; justify-content: space-between; height: 24px; margin-bottom: 22px; }
.modal-head h2 { font-size: 14px; font-weight: 700; }
.modal-head button { color: #888; }
.field { display: flex; align-items: center; height: 30px; color: #999; }
.field > :first-child { width: 116px; }
.field.text { height: 82px; align-items: flex-start; padding-top: 21px; }
.field.text p { color: #000; margin-bottom: 7px; }
.field.text .hint { color: #999; }
.select { position: relative; color: #888; }
.select select { appearance: none; width: 200px; height: 30px; border: 1px solid #dcdfe8; padding: 0 10px; background: #fff; color: #000; }
.select svg { position: absolute; right: 9px; top: 12px; }
.buttons { display: flex; justify-content: center; gap: 15px; padding: 30px 0 0; }
.buttons button { width: 66px; height: 30px; border: 1px solid #dcdfe8; color: #006eff; }
.buttons .primary { background: #006eff; border-color: #006eff; color: #fff; font-weight: 700; }
.outline { position: absolute; left: -26px; top: -24px; width: 585px; height: 333px; border: 2px solid #ed1c24; }
.arrows { position: absolute; left: 0; top: -110px; fill: #ed1c24; stroke: none; }
.remark { position: absolute; left: 784px; top: -130px; font-size: 32px; line-height: 42px; color: #ed1c24; white-space: nowrap; }
```
